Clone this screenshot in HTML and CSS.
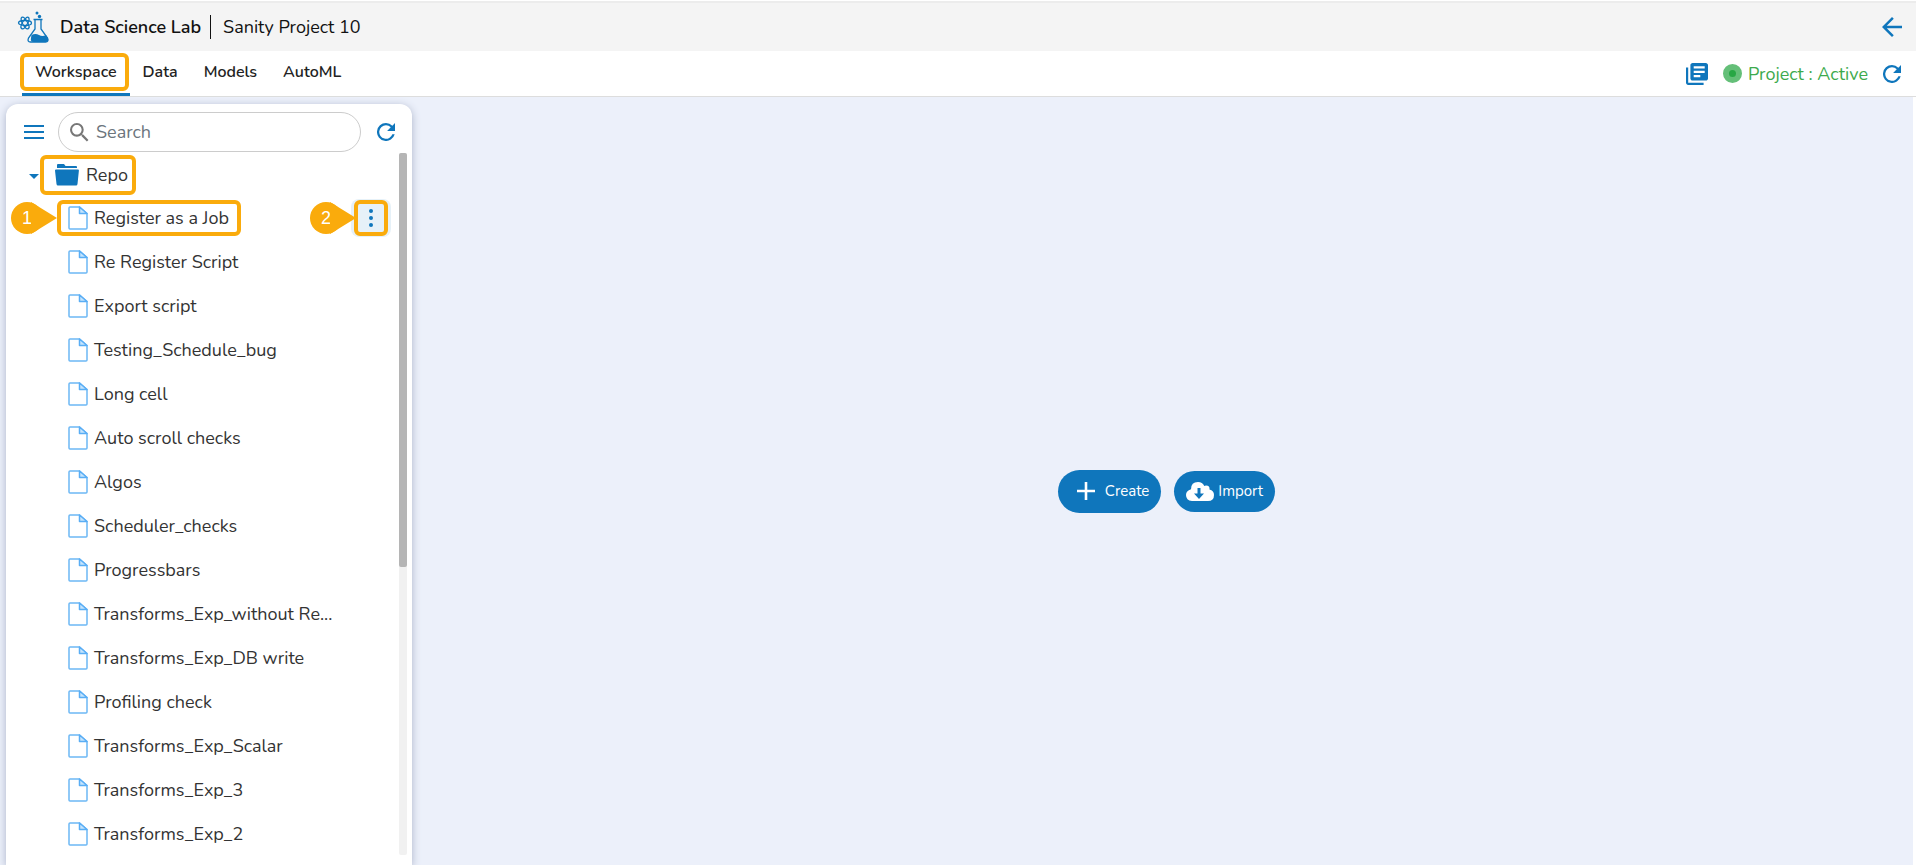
FILE: index.html
```html
<!doctype html>
<html lang="en">
  <head>
    <meta charset="utf-8">
    <title>Data Science Lab</title>
    <link rel="stylesheet" href="styles.css">
  </head>
  <body>

    <svg class="sprite" aria-hidden="true">
      <symbol id="file" viewBox="0 0 20 24">
        <path d="M2 1h9.500L19 7.500V22q0 1-1 1H2q-1 0-1-1V2q0-1 1-1z" fill="#fff" stroke="#6cb8f5" stroke-width="1.500"/>
        <path d="M11.500 1V7.500H19z" fill="#c5e4fd" stroke="#5aaef5" stroke-width="1.500" stroke-linejoin="round"/>
      </symbol>
      <symbol id="refresh" viewBox="4 4 16 16">
        <path d="M17.650 6.350A7.960 7.960 0 0 0 12 4a8 8 0 1 0 7.730 10h-2.080A6 6 0 1 1 12 6c1.660 0 3.140.690 4.220 1.780L13 11h7V4l-2.350 2.350z"/>
      </symbol>
    </svg>

    <header class="header">
      <svg class="logo" viewBox="0 0 32 32" fill="none" stroke="#0f76bc">
        <g stroke-width="1.300">
          <ellipse cx="8" cy="12" rx="6.500" ry="2.500"/>
          <ellipse cx="8" cy="12" rx="6.500" ry="2.500" transform="rotate(60 8 12)"/>
          <ellipse cx="8" cy="12" rx="6.500" ry="2.500" transform="rotate(120 8 12)"/>
        </g>
        <path d="M18 9v9l-6.500 9q-1.500 4 2 4h15q3.500 0 2-4L24 18V9M16.500 8.500h9" stroke-width="1.300"/>
        <path d="M14.500 24q4-2 7.500 0t7 0l2 3q1 4-2 4H17q-4 0-3-4z" fill="#0f76bc" stroke="none"/>
        <circle cx="20" cy="2" r="1.500" fill="#0f76bc" stroke="none"/>
        <circle cx="22.500" cy="5.500" r="1.700" fill="#0f76bc" stroke="none"/>
      </svg>
      <h1>Data Science Lab</h1>
      <span class="project">Sanity Project 10</span>
      <button class="icon-btn back" aria-label="Back">
        <svg width="20" height="20" viewBox="4 4 16 16"><path d="M20 11H7.830l5.590-5.590L12 4l-8 8 8 8 1.410-1.410L7.830 13H20z"/></svg>
      </button>
    </header>

    <nav class="nav">
      <a href="#workspace" class="tab active">Workspace</a>
      <a href="#data" class="tab">Data</a>
      <a href="#models" class="tab">Models</a>
      <a href="#automl" class="tab">AutoML</a>
      <div class="status">
        <button class="icon-btn" aria-label="Library">
          <svg width="22" height="22" viewBox="2 2 20 20"><path d="M4 6H2v14c0 1.100.900 2 2 2h14v-2H4V6zm16-4H8c-1.100 0-2 .900-2 2v12c0 1.100.900 2 2 2h12c1.100 0 2-.900 2-2V4c0-1.100-.900-2-2-2zm-1 9H9V9h10v2zm-4 4H9v-2h6v2zm4-8H9V5h10v2z"/></svg>
        </button>
        <span class="dot"></span>
        <span class="state">Project : Active</span>
        <button class="icon-btn" aria-label="Refresh project">
          <svg width="18" height="18"><use href="#refresh"/></svg>
        </button>
      </div>
    </nav>

    <div class="content">
      <aside class="panel">
        <div class="tools">
          <button class="icon-btn" aria-label="Menu">
            <svg width="20" height="14" viewBox="0 0 20 14"><path d="M0 0h20v2H0zM0 6h20v2H0zM0 12h20v2H0z"/></svg>
          </button>
          <label class="search">
            <svg width="19" height="19" viewBox="3 3 18 18"><path d="M15.500 14h-.790l-.280-.270A6.470 6.470 0 0 0 16 9.500 6.500 6.500 0 1 0 9.500 16c1.610 0 3.090-.590 4.230-1.570l.270.280v.790l5 4.990L20.490 19l-4.990-5zm-6 0C7.010 14 5 11.990 5 9.500S7.010 5 9.500 5 14 7.010 14 9.500 11.990 14 9.500 14z"/></svg>
            <input type="text" placeholder="Search" aria-label="Search">
          </label>
          <button class="icon-btn" aria-label="Refresh list">
            <svg width="18" height="18"><use href="#refresh"/></svg>
          </button>
        </div>

        <div class="tree">
          <div class="list">
            <div class="folder">
              <span class="caret"></span>
              <span class="folder-name">
                <svg width="24" height="22" viewBox="0 0 24 22"><path d="M2 3V1q0-1 1-1h6l1.500 2H21q1 0 1 1v1H2zM1 5.500h22q1 0 .900 1L22.500 20q-.200 1.500-1.500 1.500H3q-1.300 0-1.500-1.500L0 6.500q0-1 1-1z"/></svg>
                Repo
              </span>
            </div>
            <ul class="files">
              <li class="selected">
                <span class="callout callout-file">1</span>
                <a href="#"><svg><use href="#file"/></svg>Register as a Job</a>
                <button class="more" aria-label="More">
                  <svg width="4" height="18" viewBox="0 0 4 18"><circle cx="2" cy="2" r="2"/><circle cx="2" cy="9" r="2"/><circle cx="2" cy="16" r="2"/></svg>
                  <span class="callout callout-more">2</span>
                </button>
              </li>
              <li><a href="#"><svg><use href="#file"/></svg>Re Register Script</a></li>
              <li><a href="#"><svg><use href="#file"/></svg>Export script</a></li>
              <li><a href="#"><svg><use href="#file"/></svg>Testing_Schedule_bug</a></li>
              <li><a href="#"><svg><use href="#file"/></svg>Long cell</a></li>
              <li><a href="#"><svg><use href="#file"/></svg>Auto scroll checks</a></li>
              <li><a href="#"><svg><use href="#file"/></svg>Algos</a></li>
              <li><a href="#"><svg><use href="#file"/></svg>Scheduler_checks</a></li>
              <li><a href="#"><svg><use href="#file"/></svg>Progressbars</a></li>
              <li><a href="#"><svg><use href="#file"/></svg>Transforms_Exp_without Re...</a></li>
              <li><a href="#"><svg><use href="#file"/></svg>Transforms_Exp_DB write</a></li>
              <li><a href="#"><svg><use href="#file"/></svg>Profiling check</a></li>
              <li><a href="#"><svg><use href="#file"/></svg>Transforms_Exp_Scalar</a></li>
              <li><a href="#"><svg><use href="#file"/></svg>Transforms_Exp_3</a></li>
              <li><a href="#"><svg><use href="#file"/></svg>Transforms_Exp_2</a></li>
            </ul>
          </div>
          <div class="scrollbar"><div class="thumb"></div></div>
        </div>
      </aside>

      <main class="main">
        <button class="btn btn-create">
          <svg width="18" height="18" viewBox="0 0 18 18"><path d="M7.700 0h2.600v7.700H18v2.600h-7.700V18H7.700v-7.700H0V7.700h7.700z"/></svg>
          Create
        </button>
        <button class="btn btn-import">
          <svg width="28" height="19" viewBox="0 0 28 19"><path fill-rule="evenodd" d="M23.500 7.500Q24 3.500 20 3.500q-1 0-1.700.500Q16.500 0 12 0 5 0 5 7.200 0 8.700 0 13q0 5.500 6 6h16q6 0 6-6 0-4.300-4.500-5.500zM11.500 6h3v5.500H18L13 17l-5-5.500h3.500z"/></svg>
          Import
        </button>
      </main>
    </div>

  </body>
</html>
```

FILE: styles.css
```css
* {
  box-sizing: border-box;
}

body {
  display: flex;
  flex-direction: column;
  height: 100vh;
  margin: 0;
  overflow: hidden;
  font-family: Nunito, 'Open Sans', sans-serif;
  font-size: 18px;
  line-height: 24px;
  color: #333;
}

button,
input {
  font: inherit;
}

a {
  color: inherit;
  text-decoration: none;
}

.sprite {
  position: absolute;
  width: 0;
  height: 0;
}

.icon-btn {
  display: flex;
  padding: 0;
  border: 0;
  background: none;
  fill: #0f76bc;
}

/* header */

.header {
  display: flex;
  align-items: center;
  flex: none;
  height: 50px;
  margin-top: 1px;
  padding: 0 14px 0 17px;
  border-top: 2px solid #ececec;
  background: #f4f4f4;
  color: #111;
}

.logo {
  width: 32px;
  height: 32px;
}

.header h1 {
  margin: 0 9px 0 11px;
  font-size: 18px;
  font-weight: 600;
}

.project {
  padding-left: 12px;
  border-left: 1px solid #111;
}

.back {
  margin-left: auto;
}

/* nav */

.nav {
  display: flex;
  flex: none;
  height: 46px;
  padding: 0 15px 0 22px;
  border-bottom: 1px solid #ddd;
  font-size: 16px;
  font-weight: 600;
  color: #222;
}

.tab {
  position: relative;
  padding: 0 13px;
  line-height: 42px;
}

.tab.active {
  border-bottom: 3px solid #0f76bc;
}

.status {
  display: flex;
  align-items: center;
  margin-left: auto;
}

.dot {
  width: 19px;
  height: 19px;
  margin: 0 6px 0 15px;
  border: 6px solid #64bf78;
  border-radius: 50%;
  background: #28a745;
}

.state {
  margin-right: 15px;
  font-size: 18px;
  font-weight: 400;
  color: #3daa4d;
}

/* sidebar */

.content {
  display: flex;
  flex: 1;
  min-height: 0;
  margin-right: 3px;
  background: #ecf0fa;
}

.panel {
  display: flex;
  flex-direction: column;
  width: 406px;
  margin: 7px 0 0 6px;
  padding: 8px 5px 10px 18px;
  border-radius: 12px 12px 0 0;
  background: #fff;
  box-shadow: 0 2px 8px #aab2c8;
}

.tools {
  display: flex;
  align-items: center;
  gap: 14px;
  padding-right: 12px;
}

.search {
  display: flex;
  align-items: center;
  flex: 1;
  height: 40px;
  margin-right: 2px;
  padding: 0 11px;
  border: 1px solid #ccc;
  border-radius: 20px;
  fill: #777;
}

.search input {
  flex: 1;
  min-width: 0;
  margin-left: 7px;
  padding: 0;
  border: 0;
  outline: 0;
  background: none;
}

.search input::placeholder {
  color: #6c757d;
}

.tree {
  display: flex;
  flex: 1;
  min-height: 0;
  margin-top: 1px;
}

.list {
  flex: 1;
  height: 100%;
}

.scrollbar {
  width: 8px;
  border-radius: 2px;
  background: #f1f1f1;
}

.thumb {
  height: 59%;
  border-radius: 2px;
  background: #b5b5b5;
}

.folder {
  display: flex;
  align-items: center;
  height: 43px;
  padding-left: 5px;
}

.caret {
  margin-top: 4px;
  border: 5px solid transparent;
  border-top-color: #0f76bc;
  border-bottom: 0;
}

.folder-name {
  display: flex;
  align-items: center;
  gap: 7px;
  position: relative;
  margin-left: 16px;
  fill: #0f76bc;
}

.files {
  margin: 0;
  padding: 0 0 0 44px;
  list-style: none;
}

.files li {
  display: flex;
  align-items: center;
  justify-content: space-between;
  position: relative;
  height: 44px;
}

.files a {
  display: flex;
  align-items: center;
  gap: 6px;
  position: relative;
}

.files a svg {
  width: 20px;
  height: 24px;
}

.more {
  display: flex;
  align-items: center;
  justify-content: center;
  position: relative;
  width: 40px;
  height: 38px;
  margin-right: 8px;
  padding: 0;
  border: 0;
  border-radius: 8px;
  background: #e6f1f8;
  fill: #0f76bc;
}

/* highlights */

.tab.active::after,
.folder-name::after,
.selected a::after,
.more::after {
  content: '';
  position: absolute;
  border: 4px solid #faab0c;
  border-radius: 6px;
}

.tab.active::after {
  inset: 2px 1px 2px -2px;
}

.folder-name::after {
  inset: -8px -8px -8px -15px;
}

.selected a::after {
  inset: -6px -12px -6px -11px;
}

.more::after {
  inset: 1px 3px 1px 3px;
}

.callout {
  position: absolute;
  z-index: 1;
  width: 32px;
  height: 32px;
  border-radius: 50%;
  background: #faab0c;
  color: #fff;
  font-family: 'Liberation Sans', sans-serif;
  font-size: 18px;
  line-height: 32px;
  text-align: center;
}

.callout::after {
  content: '';
  position: absolute;
  top: 0;
  left: 20px;
  border: 16px solid transparent;
  border-left: 26px solid #faab0c;
  border-right: 0;
}

.callout-file {
  left: -57px;
}

.callout-more {
  left: -41px;
}

/* main */

.main {
  display: flex;
  align-items: center;
  justify-content: center;
  flex: 1;
  gap: 13px;
  padding: 20px 0 0 8px;
}

.btn {
  display: flex;
  align-items: center;
  height: 41px;
  border: 0;
  border-radius: 22px;
  background: #0f76bc;
  color: #fff;
  fill: #fff;
  font-size: 15px;
}

.btn-create {
  gap: 10px;
  height: 43px;
  padding: 0 12px 0 19px;
}

.btn-import {
  gap: 4px;
  padding: 0 12px;
}
```
